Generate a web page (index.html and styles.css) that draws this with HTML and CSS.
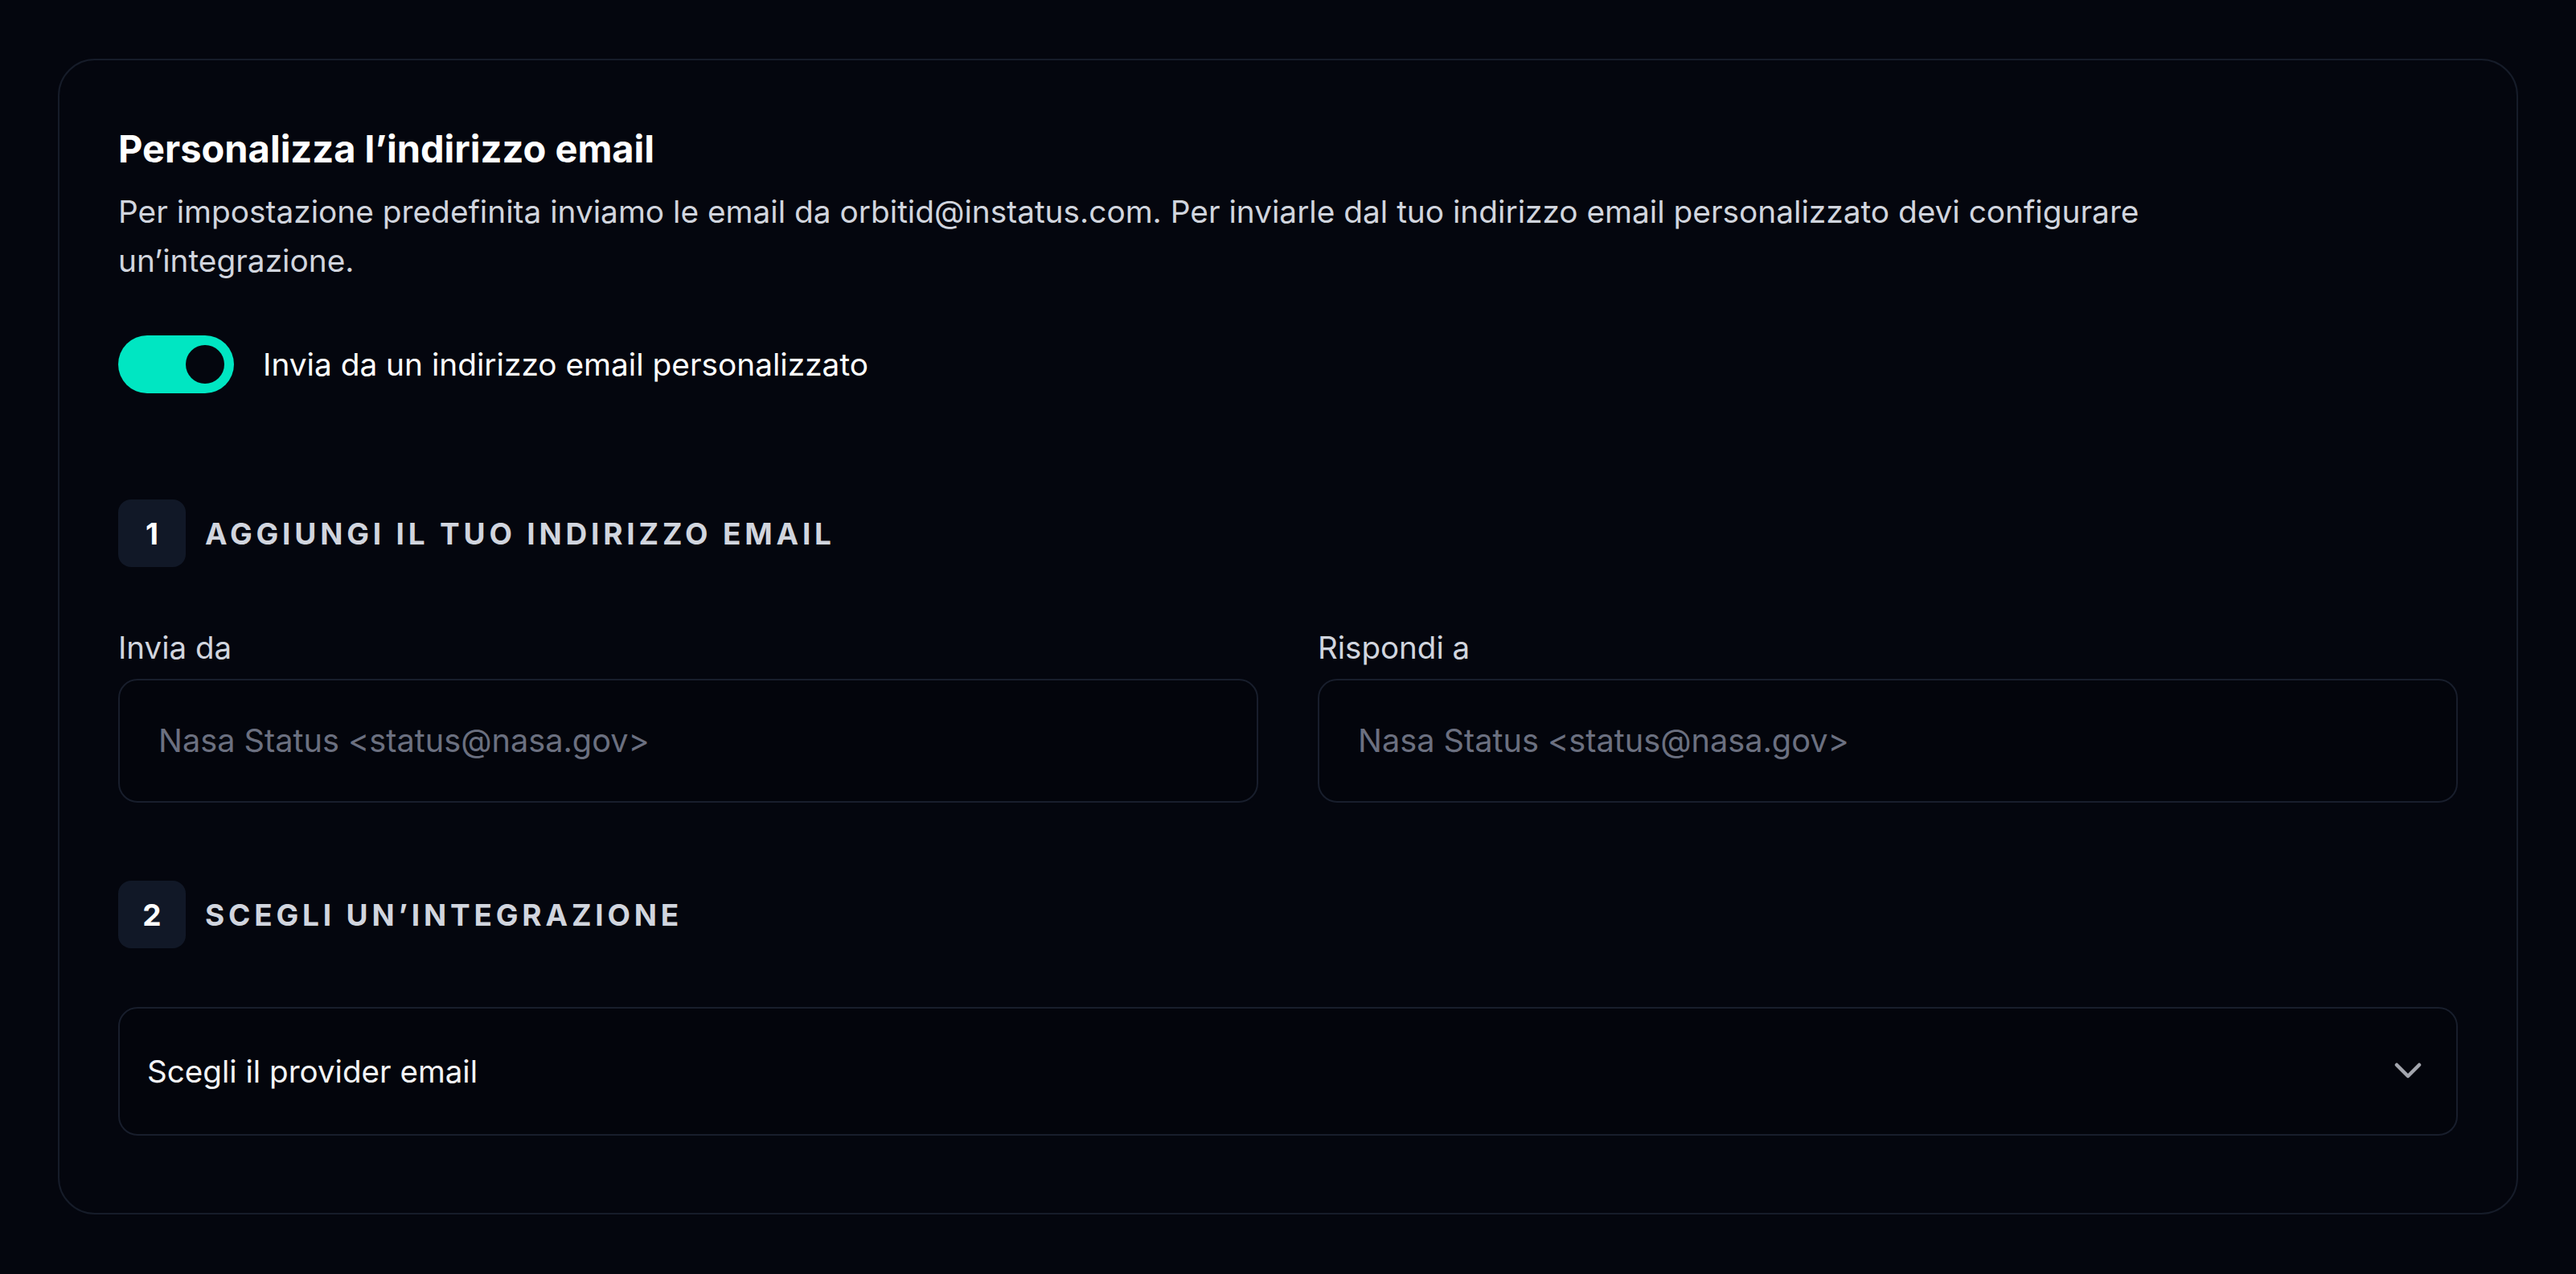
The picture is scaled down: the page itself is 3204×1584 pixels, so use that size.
FILE: index.html
```html
<!DOCTYPE html>
<html lang="it">
<head>
<meta charset="utf-8">
<title>Personalizza l’indirizzo email</title>
<link rel="stylesheet" href="styles.css">
</head>
<body>
<section class="card">
  <h2 class="title">Personalizza l’indirizzo email</h2>
  <p class="desc">Per impostazione predefinita inviamo le email da orbitid@instatus.com. Per inviarle dal tuo indirizzo email personalizzato devi configurare un’integrazione.</p>

  <label class="toggle-row">
    <span class="toggle"><span class="knob"></span></span>
    <span class="toggle-label">Invia da un indirizzo email personalizzato</span>
  </label>

  <div class="step step-1">
    <span class="badge">1</span>
    <span class="step-title">AGGIUNGI IL TUO INDIRIZZO EMAIL</span>
  </div>

  <div class="fields">
    <div class="field">
      <label class="field-label">Invia da</label>
      <input class="input" type="text" placeholder="Nasa Status &lt;status@nasa.gov&gt;">
    </div>
    <div class="field">
      <label class="field-label">Rispondi a</label>
      <input class="input" type="text" placeholder="Nasa Status &lt;status@nasa.gov&gt;">
    </div>
  </div>

  <div class="step step-2">
    <span class="badge">2</span>
    <span class="step-title">SCEGLI UN’INTEGRAZIONE</span>
  </div>

  <div class="select">
    <span class="select-text">Scegli il provider email</span>
    <svg class="chevron" width="36" height="22" viewBox="0 0 36 22" aria-hidden="true">
      <polyline points="4,3 18,17 32,3" fill="none" stroke="#a3a6ae" stroke-width="4.5" stroke-linecap="round" stroke-linejoin="round"/>
    </svg>
  </div>
</section>
</body>
</html>
```

FILE: styles.css
```css
* { box-sizing: border-box; }

html, body {
  background: #04060e;
}

body {
  margin: 0;
  padding: 73px 72px 0;
  font-family: Inter, "Noto Sans", "Liberation Sans", sans-serif;
  color: #f3f4f6;
}

.card {
  border: 2px solid #161c29;
  border-radius: 46px;
  padding: 82px 73px 96px;
  background: #04060e;
}

.title {
  margin: 0;
  font-size: 47px;
  line-height: 56px;
  font-weight: 700;
  color: #ffffff;
}

.desc {
  margin: 19px 0 0;
  max-width: 2700px;
  font-size: 38.8px;
  line-height: 61px;
  color: #d1d5de;
}

.toggle-row {
  margin-top: 63px;
  display: flex;
  align-items: center;
  gap: 36px;
  height: 72px;
}

.toggle {
  width: 144px;
  height: 72px;
  border-radius: 36px;
  background: #00e6c2;
  display: flex;
  align-items: center;
  justify-content: flex-end;
  padding-right: 12px;
  flex: none;
}

.knob {
  width: 48px;
  height: 48px;
  border-radius: 50%;
  background: #04060e;
}

.toggle-label {
  font-size: 38.8px;
  line-height: 72px;
  color: #ffffff;
}

.step {
  display: flex;
  align-items: center;
  gap: 24px;
}

.step-1 { margin-top: 132px; }
.step-2 { margin-top: 97px; }

.badge {
  width: 84px;
  height: 84px;
  border-radius: 16px;
  background: #111827;
  color: #ffffff;
  font-size: 37px;
  font-weight: 700;
  display: flex;
  align-items: center;
  justify-content: center;
  flex: none;
}

.step-title {
  font-size: 37px;
  font-weight: 700;
  letter-spacing: 0.13em;
  color: #d1d5de;
}

.fields {
  margin-top: 76px;
  display: grid;
  grid-template-columns: 1fr 1fr;
  gap: 74px;
}

.field {
  display: flex;
  flex-direction: column;
  gap: 15px;
}

.field-label {
  font-size: 38.5px;
  line-height: 48px;
  color: #d1d5de;
}

.input {
  height: 154px;
  width: 100%;
  border: 2px solid #181e2c;
  border-radius: 24px;
  background: #03050c;
  padding: 0 48px;
  font-family: inherit;
  font-size: 39.7px;
  color: #f3f4f6;
  outline: none;
}

.input::placeholder {
  color: #6b7080;
}

.select {
  margin-top: 73px;
  height: 160px;
  border: 2px solid #181e2c;
  border-radius: 24px;
  background: #03050c;
  padding: 0 42px 0 34px;
  display: flex;
  align-items: center;
  justify-content: space-between;
}

.select-text {
  font-size: 38.6px;
  color: #f3f4f6;
}

.chevron {
  flex: none;
}
```
